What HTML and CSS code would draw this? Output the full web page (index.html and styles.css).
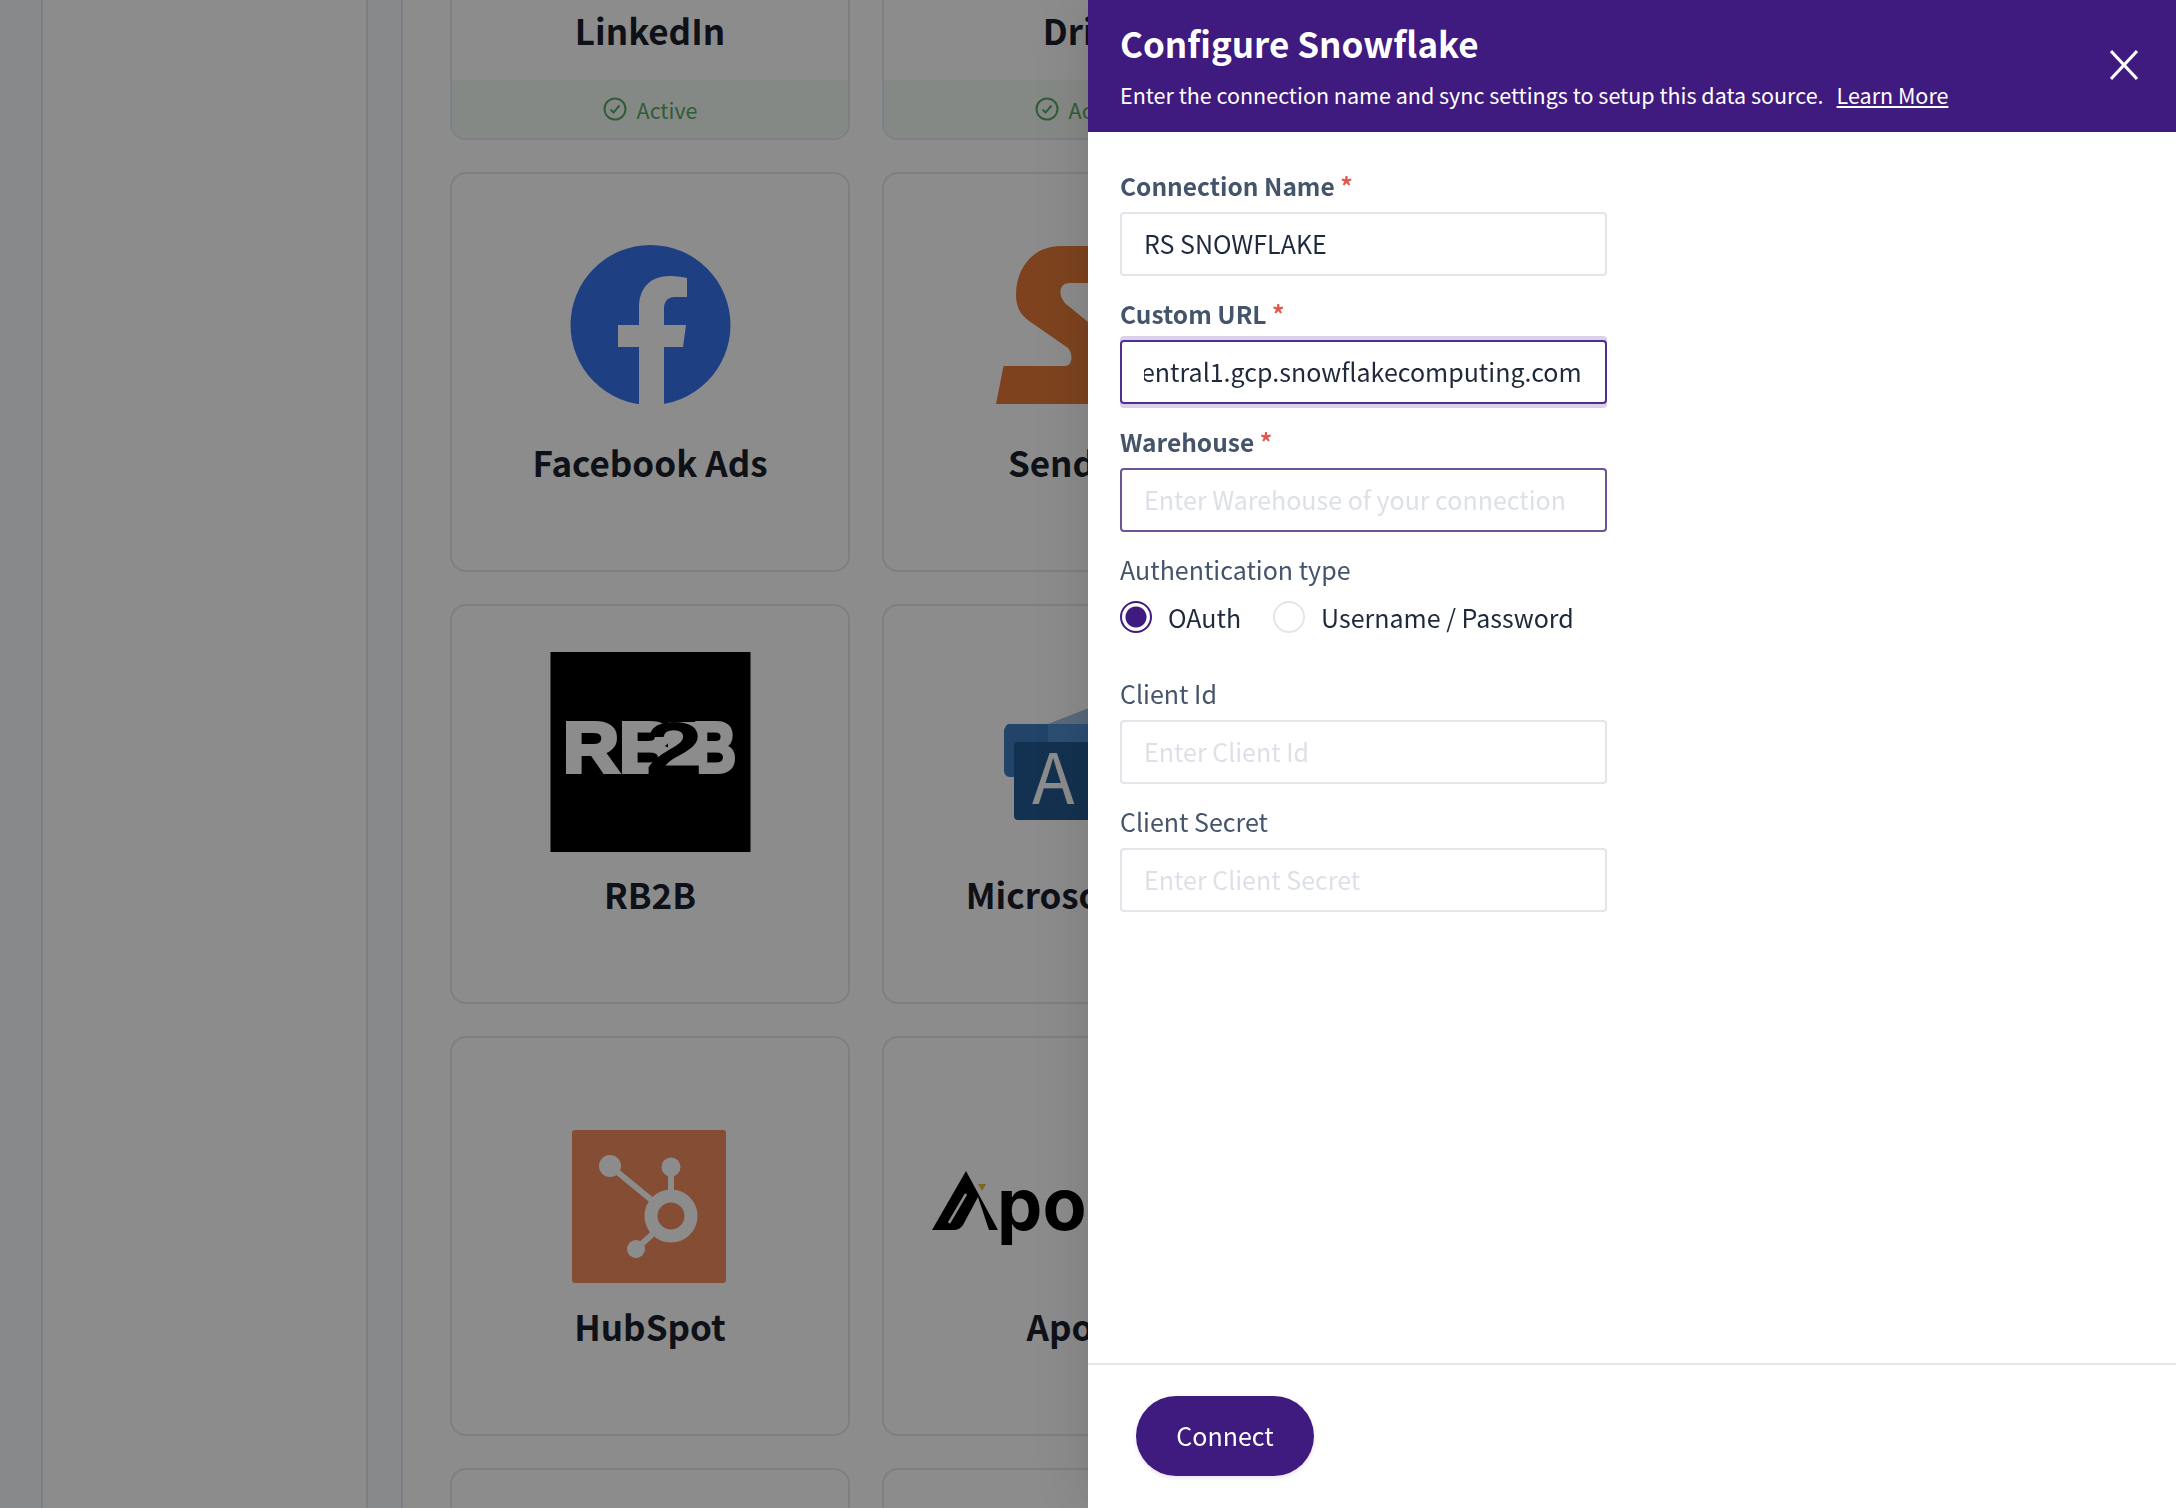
FILE: index.html
```html
<!DOCTYPE html>
<html lang="en">
<head>
  <meta charset="UTF-8" />
  <title>Configure Snowflake</title>
  <link rel="stylesheet" href="styles.css">
</head>
<body>
  <div class="app">
    <div class="rail"></div>
    <aside class="sidebar"></aside>
    <div class="gutter"></div>
    <main class="main">
      <div class="source-grid">
        <div class="source-card active">
          <div class="source-logo"></div>
          <div class="source-name">LinkedIn</div>
          <div class="source-status">
            <svg class="status-icon" viewBox="0 0 24 24"><circle cx="12" cy="12" r="10.5"/><path d="M7.5 12.5l3 3 6-7"/></svg>
            Active
          </div>
        </div>
        <div class="source-card active">
          <div class="source-logo"></div>
          <div class="source-name">Drift</div>
          <div class="source-status">
            <svg class="status-icon" viewBox="0 0 24 24"><circle cx="12" cy="12" r="10.5"/><path d="M7.5 12.5l3 3 6-7"/></svg>
            Active
          </div>
        </div>

        <div class="source-card">
          <svg class="source-logo" viewBox="0 0 395 200">
            <circle cx="197.500" cy="105" r="80" fill="#3775ee"/>
            <path fill="#fff" d="M186 186V127H165V105H186V88C186 67 198 56 217 56C224 56 230 57 234 58V77H222C214 77 211 82 211 89V105H233L230 127H211V186Z"/>
          </svg>
          <div class="source-name">Facebook Ads</div>
        </div>
        <div class="source-card">
          <svg class="source-logo" viewBox="0 0 395 200">
            <path fill="#e57a38" d="M214 26H176C148 26 131 48 131 75C131 90 138 97 147 103L183 128C188 133 188 146 180 146H118.500L111 184H214V111L183.500 86C174 80 171 63 185 63H214Z"/>
          </svg>
          <div class="source-name">Sendoso</div>
        </div>

        <div class="source-card">
          <svg class="source-logo" viewBox="0 0 395 200">
            <rect x="97.500" y="0" width="200" height="200" fill="#000"/>
            <text class="rb2b-text" x="110" y="120" textLength="112" lengthAdjust="spacingAndGlyphs">RB</text>
            <text class="rb2b-text" x="240" y="120" textLength="43" lengthAdjust="spacingAndGlyphs">B</text>
            <rect x="215" y="70" width="35" height="51" fill="#fff"/>
            <text class="rb2b-two" x="192" y="122" textLength="58" lengthAdjust="spacingAndGlyphs">2</text>
          </svg>
          <div class="source-name">RB2B</div>
        </div>
        <div class="source-card">
          <svg class="source-logo" viewBox="0 0 395 200">
            <path fill="#9fc0e0" d="M163 72L214 52V72Z"/>
            <path fill="#3f7cc0" d="M125 72H214V125H125C121 125 119 122 119 118V78C121 74 121 72 125 72Z"/>
            <path fill="#4f8fd0" d="M163 72H214V125H163Z"/>
            <rect x="129" y="90" width="90" height="78" rx="4" fill="#235a92"/>
            <text class="access-letter" x="147" y="152">A</text>
          </svg>
          <div class="source-name">Microsoft Ads</div>
        </div>

        <div class="source-card">
          <svg class="source-logo" viewBox="0 0 395 200">
            <rect x="119" y="46" width="154" height="153" rx="3" fill="#f58c62"/>
            <g fill="#fff">
              <circle cx="38" cy="36" r="11" transform="translate(119 46)"/>
              <circle cx="99" cy="37" r="9.500" transform="translate(119 46)"/>
              <circle cx="64" cy="119" r="9" transform="translate(119 46)"/>
            </g>
            <g fill="none" stroke="#fff" transform="translate(119 46)">
              <circle cx="99" cy="86" r="20" stroke-width="13"/>
              <path stroke-width="6" d="M38 36L82 72M99 37V66M64 119L84 101"/>
            </g>
          </svg>
          <div class="source-name">HubSpot</div>
        </div>
        <div class="source-card">
          <svg class="source-logo" viewBox="0 0 395 200">
            <path fill="#000" d="M81 87L47 146H68C73 146 76 144 78 141L93 113L104 146H113Z"/>
            <path fill="none" stroke="#fff" stroke-width="2.500" d="M81 110L64 139"/>
            <path fill="#e8b83c" d="M93 100H101L97 107Z"/>
            <text class="apollo-text" x="112" y="146">pollo.io</text>
          </svg>
          <div class="source-name">Apollo</div>
        </div>

        <div class="source-card"></div>
        <div class="source-card"></div>
      </div>
    </main>
  </div>

  <div class="overlay"></div>

  <section class="drawer">
    <header class="drawer-header">
      <div>
        <h2 class="drawer-title">Configure Snowflake</h2>
        <p class="drawer-subtitle">Enter the connection name and sync settings to setup this data source.<a class="learn-more" href="#">Learn More</a></p>
      </div>
      <button class="close-button" aria-label="Close">
        <svg viewBox="0 0 28 30"><path d="M1 1L27 29M27 1L1 29"/></svg>
      </button>
    </header>

    <form class="drawer-body">
      <div class="field">
        <label class="field-label required">Connection Name <span class="star">*</span></label>
        <input class="field-input" type="text" value="RS SNOWFLAKE" />
      </div>
      <div class="field">
        <label class="field-label required">Custom URL <span class="star">*</span></label>
        <input class="field-input is-focused" type="text" value="entral1.gcp.snowflakecomputing.com" />
      </div>
      <div class="field">
        <label class="field-label required">Warehouse <span class="star">*</span></label>
        <input class="field-input is-invalid" type="text" placeholder="Enter Warehouse of your connection" />
      </div>
      <div class="field auth-field">
        <div class="field-label">Authentication type</div>
        <div class="radio-group">
          <label class="radio-option"><input type="radio" name="auth" checked />OAuth</label>
          <label class="radio-option"><input type="radio" name="auth" />Username / Password</label>
        </div>
      </div>
      <div class="field">
        <label class="field-label">Client Id</label>
        <input class="field-input" type="text" placeholder="Enter Client Id" />
      </div>
      <div class="field">
        <label class="field-label">Client Secret</label>
        <input class="field-input" type="text" placeholder="Enter Client Secret" />
      </div>
    </form>

    <footer class="drawer-footer">
      <button class="connect-button">Connect</button>
    </footer>
  </section>
</body>
</html>
```

FILE: styles.css
```css
* {
  box-sizing: border-box;
}

body {
  margin: 0;
  height: 1508px;
  overflow: hidden;
  font-family: "Noto Sans CJK SC", "Noto Sans", sans-serif;
  background: #f7fafc;
  color: #1a202c;
}

.app {
  display: flex;
  height: 1508px;
}

.rail {
  width: 41px;
  flex: none;
}

.sidebar {
  width: 327px;
  flex: none;
  background: #fff;
  border-left: 2px solid #e2e8f0;
  border-right: 2px solid #e2e8f0;
}

.gutter {
  width: 33px;
  flex: none;
}

.main {
  flex: 1;
  background: #fff;
  border-left: 2px solid #e2e8f0;
  padding-left: 47px;
  overflow: hidden;
}

.source-grid {
  display: grid;
  grid-template-columns: repeat(2, 400px);
  grid-auto-rows: 400px;
  gap: 32px;
  margin-top: -260px;
}

.source-card {
  display: flex;
  flex-direction: column;
  align-items: center;
  padding-top: 46px;
  background: #fff;
  border: 2px solid #e2e8f0;
  border-radius: 16px;
  overflow: hidden;
}

.source-logo {
  display: block;
  width: 395px;
  height: 200px;
  flex: none;
}

.source-name {
  margin-top: 18px;
  font-size: 35px;
  line-height: 48px;
  font-weight: 600;
  white-space: nowrap;
}

.source-status {
  display: flex;
  align-items: center;
  justify-content: center;
  gap: 10px;
  width: 100%;
  height: 58px;
  margin-top: auto;
  background: #f3faf3;
  color: #5aa868;
  font-size: 21.5px;
}

.status-icon {
  width: 24px;
  height: 24px;
  fill: none;
  stroke: #5aa868;
  stroke-width: 2;
}

.rb2b-text,
.rb2b-two {
  font-family: "Liberation Sans", sans-serif;
  font-weight: 700;
  font-size: 70px;
}

.rb2b-text {
  fill: #fff;
  stroke: #fff;
  stroke-width: 4px;
}

.rb2b-two {
  fill: #000;
  font-size: 74px;
}

.access-letter {
  font-size: 70px;
  fill: #fff;
}

.apollo-text {
  font-family: Inter, sans-serif;
  font-weight: 700;
  font-size: 72px;
  fill: #000;
}

.overlay {
  position: fixed;
  inset: 0;
  background: rgba(0, 0, 0, 0.45);
}

.drawer {
  position: fixed;
  top: 0;
  right: 0;
  bottom: 0;
  width: 1088px;
  display: flex;
  flex-direction: column;
  background: #fff;
  box-shadow: 0 0 60px rgba(0, 0, 0, 0.15);
}

.drawer-header {
  display: flex;
  justify-content: space-between;
  height: 132px;
  padding: 19px 38px 0 32px;
  background: #3f1a7f;
  color: #fff;
}

.drawer-title {
  margin: 0;
  font-size: 35px;
  line-height: 48px;
  font-weight: 600;
}

.drawer-subtitle {
  margin: 10px 0 0;
  font-size: 21.5px;
  line-height: 36px;
}

.learn-more {
  margin-left: 13px;
  color: #fff;
  text-decoration: underline;
}

.close-button {
  width: 28px;
  height: 30px;
  margin-top: 31px;
  padding: 0;
  border: none;
  background: none;
}

.close-button svg {
  display: block;
  stroke: #fff;
  stroke-width: 3;
  fill: none;
}

.drawer-body {
  flex: 1;
  display: flex;
  flex-direction: column;
  gap: 20px;
  padding: 36px 0 0 32px;
}

.field {
  width: 487px;
}

.field-label {
  display: block;
  margin-bottom: 9px;
  font-size: 25px;
  line-height: 35px;
  color: #44546a;
}

.field-label.required {
  font-size: 24.5px;
  font-weight: 600;
}

.star {
  color: #e2574c;
  font-weight: 600;
}

.field-input {
  display: block;
  width: 100%;
  height: 64px;
  padding: 0 22px 2px;
  border: 2px solid #e2e6eb;
  border-radius: 4px;
  outline: none;
  font-family: inherit;
  font-size: 25px;
  color: #1e293b;
}

.field-input::placeholder {
  color: #dde0e6;
  opacity: 1;
}

.field-input.is-focused {
  border-color: #512d92;
  box-shadow: 0 -4px 0 #d9d1e8, 0 4px 0 #d9d1e8;
  text-indent: -3px;
}

.field-input.is-invalid {
  border-color: #6b5596;
}

.auth-field {
  height: 104px;
}

.radio-group {
  display: flex;
  gap: 32px;
  margin-top: 10px;
}

.radio-option {
  display: flex;
  align-items: center;
  gap: 16px;
  height: 40px;
  font-size: 25px;
  color: #1e293b;
}

.radio-option input {
  appearance: none;
  width: 32px;
  height: 32px;
  margin: 0;
  border: 2px solid #e2e6eb;
  border-radius: 50%;
  background: #fff;
}

.radio-option input:checked {
  border-color: #3f1a7f;
  background: radial-gradient(circle, #3f1a7f 0, #3f1a7f 10px, #fff 11px);
}

.drawer-footer {
  padding: 31px 0 32px 48px;
  border-top: 2px solid #e5e7eb;
}

.connect-button {
  display: block;
  width: 178px;
  height: 80px;
  padding: 0 0 2px;
  border: none;
  border-radius: 40px;
  background: #3f1a7f;
  box-shadow: 0 2px 4px rgba(63, 26, 127, 0.12);
  color: #fff;
  font-family: inherit;
  font-size: 25px;
  font-weight: 400;
}
```
